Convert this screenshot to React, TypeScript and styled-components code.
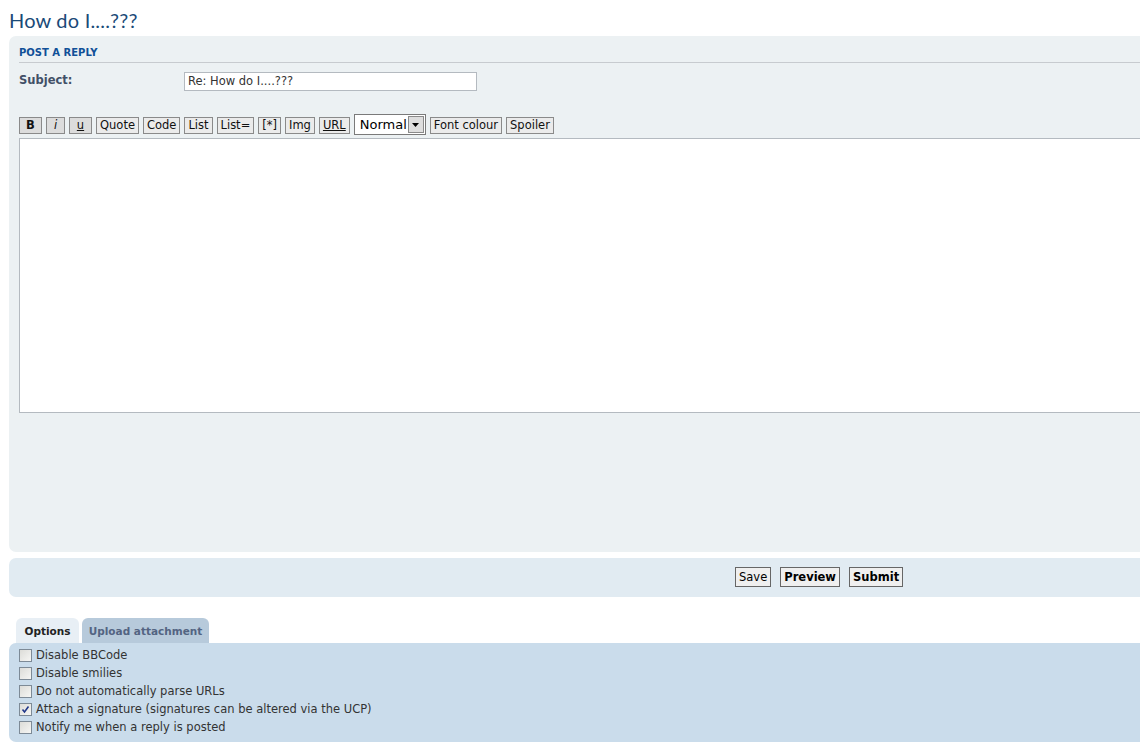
import React, { FC } from 'react';
import styled, { createGlobalStyle } from 'styled-components';

const GlobalStyle = createGlobalStyle`
    html, body {
        margin: 0;
        padding: 0;
        background: #ffffff;
        overflow: hidden;
    }
    body {
        font-family: "DejaVu Sans", Verdana, sans-serif;
        font-size: 11.5px;
        color: #333333;
    }
`

const Page = styled.div`
    width: 1140px;
    overflow: hidden;
    padding-left: 9px;
    box-sizing: border-box;
`

const Title = styled.h2`
    margin: 0;
    padding-top: 6px;
    font-family: "Lato", "Open Sans", sans-serif;
    font-weight: 400;
    font-size: 20px;
    line-height: 28px;
    color: #1a4a78;
    letter-spacing: 0.2px;
`

const Panel = styled.div<{ $bg: string; $height: number }>`
    width: 1200px;
    height: ${p => p.$height}px;
    background: ${p => p.$bg};
    border-radius: 7px;
    box-sizing: border-box;
`

const PostPanel = styled(Panel)`
    margin-top: 2px;
    padding: 8px 0 0 10px;
`

const PanelHeading = styled.h3`
    margin: 0;
    height: 18px;
    line-height: 18px;
    border-bottom: 1px solid #c7cbcf;
    font-size: 10px;
    font-weight: bold;
    text-transform: uppercase;
    color: #115098;
    font-family: "DejaVu Sans", sans-serif;
`

const SubjectRow = styled.div`
    display: flex;
    align-items: flex-start;
    margin-top: 9px;
`

const Label = styled.label`
    width: 165px;
    padding-top: 1px;
    font-weight: bold;
    color: #425067;
`

const TextInput = styled.div`
    width: 293px;
    height: 19px;
    box-sizing: border-box;
    border: 1px solid #b4bac0;
    background: #ffffff;
    padding: 2px 3px;
    line-height: 13px;
    color: #333;
`

const Toolbar = styled.div`
    display: flex;
    align-items: center;
    gap: 4px;
    margin-top: 23px;
    height: 21px;
`

const ToolButton = styled.span<{ $bold?: boolean; $italic?: boolean; $underline?: boolean; $dark?: boolean; $w?: number }>`
    display: inline-flex;
    align-items: center;
    justify-content: center;
    height: 17px;
    margin-top: 1px;
    padding: 0 3px;
    min-width: ${p => (p.$w ? `${p.$w}px` : 'auto')};
    box-sizing: border-box;
    border: 1px solid #8a8a8a;
    background: ${p => (p.$dark ? '#dcdcdc' : '#ebebeb')};
    font-size: 11.5px;
    color: #111;
    font-weight: ${p => (p.$bold ? 'bold' : 'normal')};
    font-style: ${p => (p.$italic ? 'italic' : 'normal')};
    text-decoration: ${p => (p.$underline ? 'underline' : 'none')};
`

const SelectBox = styled.span`
    display: inline-flex;
    align-items: center;
    justify-content: space-between;
    height: 21px;
    width: 72px;
    box-sizing: border-box;
    border: 1px solid #7a7a7a;
    background: #ffffff;
    padding: 0 1px 0 5px;
    font-size: 13px;
    color: #000;
`

const SelectArrow = styled.span`
    display: inline-flex;
    align-items: center;
    justify-content: center;
    width: 16px;
    height: 17px;
    box-sizing: border-box;
    border: 1px solid #8a8a8a;
    background: #dedede;
`

const TextArea = styled.div`
    margin-top: 3px;
    height: 275px;
    box-sizing: border-box;
    border: 1px solid #b4bac0;
    background: #ffffff;
`

const SubmitPanel = styled(Panel)`
    margin-top: 6px;
    display: flex;
    align-items: flex-start;
    gap: 9px;
    padding: 9px 0 0 726px;
`

const FormButton = styled.span<{ $bold?: boolean }>`
    display: inline-flex;
    align-items: center;
    height: 20px;
    padding: 0 3px;
    box-sizing: border-box;
    border: 1px solid #666;
    background: #efefef;
    color: #000;
    font-size: 11.5px;
    font-weight: ${p => (p.$bold ? 'bold' : 'normal')};
`

const Tabs = styled.div`
    display: flex;
    gap: 3px;
    margin: 21px 0 0 7px;
`

const Tab = styled.span<{ $active?: boolean; $w: number }>`
    display: flex;
    align-items: center;
    justify-content: center;
    width: ${p => p.$w}px;
    height: 25px;
    border-radius: 6px 6px 0 0;
    background: ${p => (p.$active ? '#e8eff5' : '#b7cadb')};
    color: ${p => (p.$active ? '#222' : '#536482')};
    font-weight: bold;
    font-size: 10.5px;
    padding-top: 1px;
    box-sizing: border-box;
`

const OptionsPanel = styled(Panel)`
    padding: 3px 0 0 10px;
`

const OptionRow = styled.div`
    display: flex;
    align-items: center;
    height: 18px;
    gap: 4px;
    color: #333;
`

const Box = styled.span`
    display: inline-flex;
    align-items: center;
    justify-content: center;
    width: 13px;
    height: 13px;
    margin-top: 1px;
    box-sizing: border-box;
    border: 1px solid #7d8a96;
    background: linear-gradient(135deg, #dcdcd8 0%, #f6f6f4 100%);
`

const Check: FC<{ checked?: boolean }> = ({ checked }) => (
    <Box>
        {checked && (
            <svg width="9" height="9" viewBox="0 0 9 9">
                <path d="M1.5 4.5 L3.5 7 L7.5 1.5" stroke="#21388a" strokeWidth="1.6" fill="none" />
            </svg>
        )}
    </Box>
)

const options = [
    { label: 'Disable BBCode' },
    { label: 'Disable smilies' },
    { label: 'Do not automatically parse URLs' },
    { label: 'Attach a signature (signatures can be altered via the UCP)', checked: true },
    { label: 'Notify me when a reply is posted' },
]

const App: FC = () => {
    return (
        <Page>
            <GlobalStyle />
            <Title>How do I....???</Title>
            <PostPanel $bg="#ecf1f3" $height={516}>
                <PanelHeading>Post a reply</PanelHeading>
                <SubjectRow>
                    <Label>Subject:</Label>
                    <TextInput>Re: How do I....???</TextInput>
                </SubjectRow>
                <Toolbar>
                    <ToolButton $bold $dark $w={23}>B</ToolButton>
                    <ToolButton $italic $dark $w={19}>i</ToolButton>
                    <ToolButton $underline $dark $w={23}>u</ToolButton>
                    <ToolButton>Quote</ToolButton>
                    <ToolButton>Code</ToolButton>
                    <ToolButton>List</ToolButton>
                    <ToolButton>List=</ToolButton>
                    <ToolButton>[*]</ToolButton>
                    <ToolButton>Img</ToolButton>
                    <ToolButton $underline>URL</ToolButton>
                    <SelectBox>
                        Normal
                        <SelectArrow>
                            <svg width="7" height="4" viewBox="0 0 7 4">
                                <path d="M0 0 H7 L3.5 4 Z" fill="#000" />
                            </svg>
                        </SelectArrow>
                    </SelectBox>
                    <ToolButton>Font colour</ToolButton>
                    <ToolButton>Spoiler</ToolButton>
                </Toolbar>
                <TextArea />
            </PostPanel>
            <SubmitPanel $bg="#e1ebf2" $height={39}>
                <FormButton>Save</FormButton>
                <FormButton $bold>Preview</FormButton>
                <FormButton $bold>Submit</FormButton>
            </SubmitPanel>
            <Tabs>
                <Tab $active $w={63}>Options</Tab>
                <Tab $w={127}>Upload attachment</Tab>
            </Tabs>
            <OptionsPanel $bg="#cadceb" $height={99}>
                {options.map(o => (
                    <OptionRow key={o.label}>
                        <Check checked={o.checked} />
                        {o.label}
                    </OptionRow>
                ))}
            </OptionsPanel>
        </Page>
    )
}

export default App
